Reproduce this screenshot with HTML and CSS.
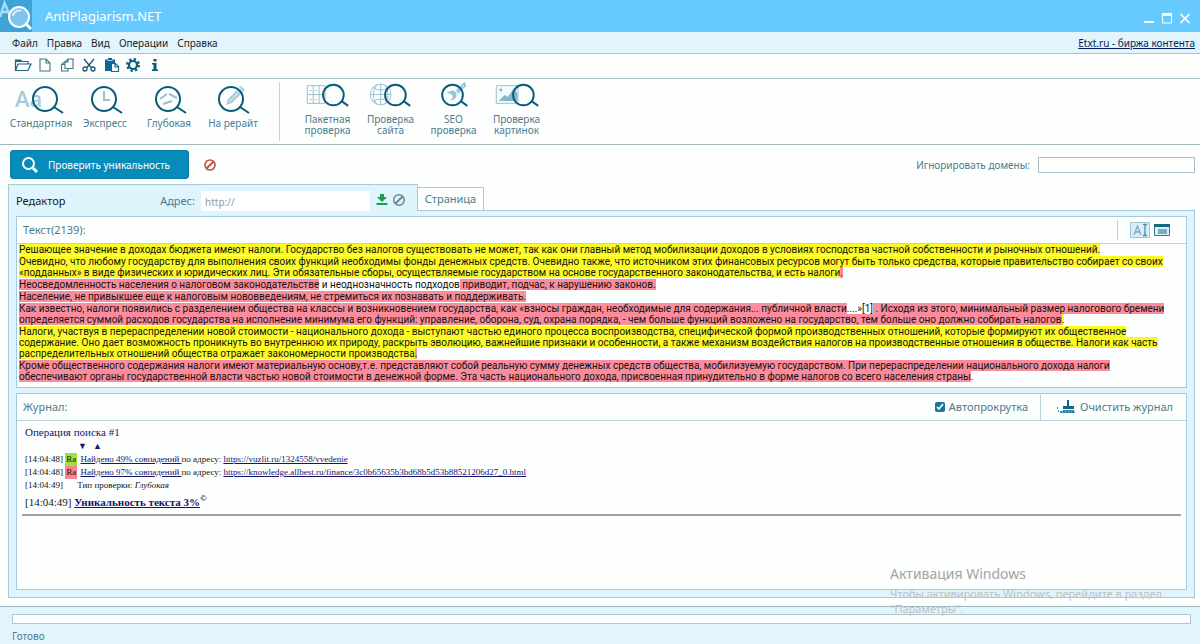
FILE: index.html
```html
<!DOCTYPE html>
<html lang="ru">
<head>
<meta charset="utf-8">
<title>AntiPlagiarism.NET</title>
<link rel="stylesheet" href="styles.css">
</head>
<body>
<header class="titlebar">
  <svg class="logo" viewBox="0 0 32 32" aria-hidden="true">
    <rect width="32" height="32" fill="#3fa3d8"/>
    <path d="M0 17L4.500 3L10 16M1.500 12H8" fill="none" stroke="#a5dcf7" stroke-width="2.500"/>
    <circle cx="19" cy="17" r="10" fill="#7fc4ea" stroke="#fff" stroke-width="2"/>
    <path d="M13 16a6 6 0 0 1 8-5" fill="none" stroke="#d5effc" stroke-width="2"/>
    <path d="M26 24l5 5" stroke="#fff" stroke-width="3"/>
  </svg>
  <h1 class="app-name">AntiPlagiarism.NET</h1>
  <div class="window-buttons">
    <button aria-label="Свернуть"><svg viewBox="0 0 12 14"><path d="M1 11h10" stroke="#fff" stroke-width="2"/></svg></button>
    <button aria-label="Развернуть"><svg viewBox="0 0 12 14"><path d="M1.500 4v8h9V4" fill="none" stroke="#fff"/><path d="M1 3.500h10" stroke="#fff" stroke-width="3"/></svg></button>
    <button aria-label="Закрыть"><svg viewBox="0 0 12 14"><path d="M1.500 3l9 9M10.500 3l-9 9" stroke="#fff" stroke-width="1.700"/></svg></button>
  </div>
</header>

<nav class="menubar">
  <button>Файл</button><button>Правка</button><button>Вид</button><button>Операции</button><button>Справка</button>
  <a class="site-link" href="#">Etxt.ru - биржа контента</a>
</nav>

<div class="toolbar">
  <button aria-label="Открыть"><svg viewBox="0 0 18 16"><path d="M1.500 13V3h5l1.500 1.500h6V7" fill="none" stroke="#1d6383" stroke-width="1.200"/><path d="M2 3h5v2H2z" fill="#1d6383"/><path d="M1.500 13.500L4 7h13l-3 6.500z" fill="#fff" stroke="#1d6383" stroke-width="1.200"/></svg></button>
  <button aria-label="Новый"><svg viewBox="0 0 18 16"><path d="M4 2h6l4 4v8H4zM10 2v4h4" fill="none" stroke="#477387" stroke-width="1.100"/></svg></button>
  <button aria-label="Копировать"><svg viewBox="0 0 18 16"><path d="M7 4.500L3.500 7.500V14H10v-2.500M3.500 7.500H7M10 2h5v9.500H7V5zM10 2v3H7" fill="none" stroke="#477387" stroke-width="1.100"/></svg></button>
  <button aria-label="Вырезать"><svg viewBox="0 0 18 16"><path d="M4 2l7.500 9M14 2l-7.500 9" stroke="#1d5672" stroke-width="1.300"/><circle cx="5" cy="12" r="2" fill="none" stroke="#1d5672" stroke-width="1.300"/><circle cx="13" cy="12" r="2" fill="none" stroke="#1d5672" stroke-width="1.300"/></svg></button>
  <button aria-label="Вставить"><svg viewBox="0 0 18 16"><path d="M3 2.500h3V1h4v1.500h3V6H9v8H3z" fill="#0d6a91"/><path d="M5.500 3.500h5" stroke="#a9d3e6"/><path d="M9.500 6.500h4l3 3v5h-7zM13 7v3h3" fill="#fff" stroke="#0d6a91" stroke-width="1.200"/></svg></button>
  <button aria-label="Настройки"><svg viewBox="0 0 18 16"><circle cx="9" cy="8" r="5.500" fill="none" stroke="#0b607f" stroke-width="3" stroke-dasharray="2.160 2.160"/><circle cx="9" cy="8" r="4" fill="none" stroke="#0b607f" stroke-width="2.200"/></svg></button>
  <button aria-label="Информация"><svg viewBox="0 0 18 16"><path d="M7.500 2h3v2.500h-3zM6 6h4.500v6.500H12V14H6v-1.500h1.500v-5H6z" fill="#0b5674"/></svg></button>
</div>

<div class="ribbon">
  <div class="group modes">
    <button><svg viewBox="0 0 64 32"><text x="6" y="23" class="glyph">Aa</text><circle cx="36" cy="15" r="12" class="lens"/><path d="M45 23l9 6" class="grip"/></svg>Стандартная</button>
    <button><svg viewBox="0 0 64 32"><path d="M31 7v9h6" class="pale"/><circle cx="31" cy="15" r="12" class="lens"/><path d="M40 23l9 6" class="grip"/></svg>Экспресс</button>
    <button><svg viewBox="0 0 64 32"><path d="M23 15l7-5M32 10l8 4M26 20l9-3" class="pale"/><circle cx="31" cy="15" r="12" class="lens"/><path d="M40 23l9 6" class="grip"/></svg>Глубокая</button>
    <button><svg viewBox="0 0 64 32"><path d="M25 21l2-6L37 5l4 4-10 10z" fill="#a9cfde"/><path d="M38 3l2-1 4 4-2 2z" fill="#a9cfde"/><path d="M29 17l9-9" stroke="#e8f4f8"/><circle cx="30" cy="15" r="12" class="lens"/><path d="M39 23l9 6" class="grip"/></svg>На рерайт</button>
  </div>
  <div class="group checks">
    <button><svg viewBox="0 0 64 28"><path d="M11.500 3.500h18v18h-18zM17.500 3v19M23.500 3v19M12 12.500h17M14 8.500h2M19 8.500h2M14 17.500h2M19 17.500h2" fill="none" stroke="#9cc0cf"/><circle cx="38" cy="13" r="10.500" class="lens"/><path d="M46 19l7 5" class="grip"/></svg>Пакетная<br>проверка</button>
    <button><svg viewBox="0 0 64 28"><circle cx="22" cy="12.500" r="10.500" class="thin"/><path d="M22 2v21M11.500 12.500h21M14 5q8 6 16 0M14 20q8-6 16 0M18 2.500q-7 10 0 20M26 2.500q7 10 0 20" class="thin"/><circle cx="37" cy="13" r="10.500" class="lens"/><path d="M45 19l7 5" class="grip"/></svg>Проверка<br>сайта</button>
    <button><svg viewBox="0 0 64 28"><path d="M25 11q4-4 8-2 4 3 1 7-2 3-6 2 4-1 3-4-2-3-6-3z" fill="#9cc7da"/><path d="M35 9l6-6 2-2 1 3-3 2-5 5" fill="none" stroke="#8cc3df" stroke-width="1.700"/><circle cx="31" cy="13" r="10.500" class="lens"/><path d="M39 19l7 5" class="grip"/></svg>SEO<br>проверка</button>
    <button><svg viewBox="0 0 64 28"><path d="M11.500 3.500h22v18h-22z" fill="#f3fafd" stroke="#9cc0cf"/><path d="M14 19l6-6 3 2 6-8 4 4v8z" fill="#82b6ca"/><circle cx="16" cy="8" r="1.500" fill="#82b6ca"/><circle cx="39" cy="13" r="10.500" class="lens"/><path d="M47 19l7 5" class="grip"/></svg>Проверка<br>картинок</button>
  </div>
</div>

<main class="workspace">
  <div class="actions">
    <button class="primary"><svg viewBox="0 0 18 18"><circle cx="7.500" cy="7.500" r="5.500" fill="none" stroke="#fff" stroke-width="2"/><path d="M12 12l4 4" stroke="#fff" stroke-width="3"/></svg>Проверить уникальность</button>
    <button class="stop" aria-label="Остановить"><svg viewBox="0 0 14 14"><circle cx="7" cy="7" r="5" fill="none" stroke="#c4533b" stroke-width="1.700"/><path d="M3.500 10.500l7-7" stroke="#c4533b" stroke-width="2"/></svg></button>
    <label class="ignore">Игнорировать домены:<input type="text"></label>
  </div>

  <div class="tabs">
    <div class="tab active">
      <span class="tab-name">Редактор</span>
      <label class="address">Адрес:<input type="text" placeholder="http://"></label>
      <button aria-label="Загрузить"><svg viewBox="0 0 14 14"><path d="M5 1h4v3h3L7 9 2 4h3z" fill="#1ea04a"/><path d="M1.500 11h11" stroke="#1ea04a" stroke-width="2"/></svg></button>
      <button aria-label="Отменить"><svg viewBox="0 0 14 14"><circle cx="7" cy="7" r="5.300" fill="none" stroke="#73858c" stroke-width="1.500"/><path d="M3.500 10.500l7-7" stroke="#73858c" stroke-width="2"/></svg></button>
    </div>
    <button class="tab other">Страница</button>
  </div>

  <div class="panel">
    <section class="box">
      <div class="box-head">
        <h2>Текст(2139):</h2>
        <div class="view-buttons">
          <button aria-label="Режим текста"><svg viewBox="0 0 20 16"><path d="M.500.500h19v15H.500z" fill="#d9eff8" stroke="#9cc5d5"/><path d="M4 13L7.500 4 11 13M5 10h5" fill="none" stroke="#7caabb" stroke-width="1.300"/><path d="M13 2.500h4M13 13.500h4M15 3v10" stroke="#4a8ca3" stroke-width="1.300"/></svg></button>
          <button aria-label="Режим окна"><svg viewBox="0 0 16 16"><path d="M.500 2.500h15v11H.500z" fill="#d9eff8" stroke="#2e7a94"/><path d="M0 2h16v3H0z" fill="#176683"/><path d="M4 7h9v5H4z" fill="#76adc1"/></svg></button>
        </div>
      </div>
      <div class="editor">
        <p><mark class="y">Решающее значение в доходах бюджета имеют налоги. Государство без налогов существовать не может, так как они главный метод мобилизации доходов в условиях господства частной собственности и рыночных отношений.</mark></p>
        <p><mark class="y">Очевидно, что любому государству для выполнения своих функций необходимы фонды денежных средств. Очевидно также, что источником этих финансовых ресурсов могут быть только средства, которые правительство собирает со своих<br>«подданных» в виде физических и юридических лиц. Эти обязательные сборы, осуществляемые государством на основе государственного законодательства, и есть налоги</mark><mark class="r">.</mark></p>
        <p><mark class="r">Неосведомленность населения о налоговом законодательстве</mark> и неоднозначность подходов<mark class="r"> приводит, подчас, к нарушению законов.</mark></p>
        <p><mark class="r">Население, не привыкшее еще к налоговым нововведениям, не стремиться их познавать и поддерживать.</mark></p>
        <p><mark class="r">Как известно, налоги появились с разделением общества на классы и возникновением государства, как «взносы граждан, необходимые для содержания... публичной власти</mark>....»[1]<mark class="r"> . Исходя из этого, минимальный размер налогового бремени<br>определяется суммой расходов государства на исполнение минимума его функций: управление, оборона, суд, охрана порядка, - чем больше функций возложено на государство, тем больше оно должно собирать налогов</mark><mark class="y">.</mark></p>
        <p><mark class="y">Налоги, участвуя в перераспределении новой стоимости - национального дохода - выступают частью единого процесса воспроизводства, специфической формой производственных отношений, которые формируют их общественное<br>содержание. Оно дает возможность проникнуть во внутреннюю их природу, раскрыть эволюцию, важнейшие признаки и особенности, а также механизм воздействия налогов на производственные отношения в обществе. Налоги как часть<br>распределительных отношений общества отражает закономерности производства</mark><mark class="r">.</mark></p>
        <p><mark class="r">Кроме общественного содержания налоги имеют материальную основу,т.е. представляют собой реальную сумму денежных средств общества, мобилизуемую государством. При перераспределении национального дохода налоги<br>обеспечивают органы государственной власти частью новой стоимости в денежной форме. Эта часть национального дохода, присвоенная принудительно в форме налогов со всего населения страны</mark>.</p>
      </div>
    </section>

    <section class="box journal">
      <div class="box-head">
        <h2>Журнал:</h2>
        <div class="journal-tools">
          <label class="autoscroll"><input type="checkbox" checked>Автопрокрутка</label>
          <button class="clear"><svg viewBox="0 0 20 16"><path d="M11 1h2v6h5v3H7V7h4z" fill="#12668a"/><path d="M7 11h11l1 3H5z" fill="#4d9fbd"/><path d="M8 11v3M11 11v3M14 11v3M17 11v3" stroke="#12668a"/><path d="M4 13h2M1 9h1M2 12h1" stroke="#12668a" stroke-width="1.500"/></svg>Очистить журнал</button>
        </div>
      </div>
      <div class="log">
        <p class="op">Операция поиска #1</p>
        <p class="arrows"><a href="#">▼</a><a href="#">▲</a></p>
        <p class="row">[14:04:48] <b class="tag green">Ra</b> <a href="#">Найдено 49% совпадений </a>по адресу: <a href="#">https://vuzlit.ru/1324558/vvedenie</a></p>
        <p class="row">[14:04:48] <b class="tag red">Ra</b> <a href="#">Найдено 97% совпадений </a>по адресу: <a href="#">https://knowledge.allbest.ru/finance/3c0b65635b3bd68b5d53b88521206d27_0.html</a></p>
        <p class="row">[14:04:49] <span class="kind">Тип проверки: <i>Глубокая</i></span></p>
        <p class="total">[14:04:49] <a href="#">Уникальность текста 3%</a><sup>©</sup></p>
        <hr>
      </div>
    </section>
  </div>
</main>

<footer class="status">
  <div class="progress"></div>
  <p>Готово</p>
</footer>

<aside class="activation">
  <strong>Активация Windows</strong>
  <p>Чтобы активировать Windows, перейдите в раздел "Параметры".</p>
</aside>
</body>
</html>
```
FILE: styles.css
```css
* { box-sizing: border-box; }
body {
  margin: 0;
  min-height: 100vh;
  display: flex;
  flex-direction: column;
  position: relative;
  background: #fdfefe;
  color: #4c7c8c;
  font: 10px/14px "Noto Sans", "Open Sans", sans-serif;
}
h1, h2, p { margin: 0; font-weight: 400; }
button { border: 0; padding: 0; margin: 0; background: none; color: inherit; font: inherit; }
svg { display: block; }
input { font: inherit; }

.titlebar { display: flex; align-items: center; height: 32px; background: #66cafe; color: #fff; }
.logo { width: 32px; height: 32px; margin-right: 13px; }
.app-name { font-size: 13px; line-height: 18px; }
.window-buttons { display: flex; gap: 6px; margin-left: auto; padding: 3px 9px 0 0; }
.window-buttons svg { width: 12px; height: 14px; }

.menubar { display: flex; align-items: center; gap: 9px; height: 22px; padding: 0 5px 0 12px; background: #e2f5fd; border-bottom: 1px solid #a9c4cd; color: #17242b; }
.site-link { margin-left: auto; color: #0a1a5c; }

.toolbar { display: flex; align-items: center; gap: 4px; height: 25px; padding: 0 0 2px 14px; border-bottom: 1px solid #a9c4cd; }
.toolbar svg { width: 18px; height: 16px; }

.ribbon { display: flex; height: 66px; padding: 3px 9px; border-bottom: 1px solid #a3b8bf; }
.group { display: flex; align-items: flex-start; }
.group button { text-align: center; white-space: nowrap; }
.modes { padding-right: 14px; border-right: 1px solid #c2d3d9; }
.modes button { width: 64px; padding-top: 2px; }
.modes svg { width: 64px; height: 32px; }
.checks { padding-left: 16px; }
.checks button { width: 63px; line-height: 11px; }
.checks svg { width: 63px; height: 28px; margin-bottom: 4px; }
.lens { fill: none; stroke: #0a5c7a; stroke-width: 2; }
.grip { fill: none; stroke: #0a5c7a; stroke-width: 2; }
.pale { fill: none; stroke: #9dbfcc; stroke-width: 2; }
.thin { fill: none; stroke: #9cc0cf; stroke-width: 1; }
.glyph { font: 600 22px "Open Sans", sans-serif; fill: #a9cbd9; }

.workspace { flex: 1; display: flex; flex-direction: column; padding: 5px 5px 8px 8px; }
.actions { display: flex; align-items: center; height: 29px; margin: 0 0 5px 2px; }
.primary { display: flex; align-items: center; gap: 9px; height: 29px; padding: 0 18px 0 10px; border: 1px solid #0b7ba6; border-radius: 3px; background: #078bba; color: #fff; }
.primary svg { width: 18px; height: 18px; }
.stop { margin-left: 14px; }
.stop svg { width: 14px; height: 14px; }
.ignore { display: flex; align-items: center; gap: 8px; margin-left: auto; }
.ignore input { width: 157px; height: 16px; border: 1px solid #a9bfc9; background: #fff; }

.tabs { display: flex; align-items: flex-end; position: relative; }
.tab { border: 1px solid #a5cbd9; border-bottom: 0; }
.active { display: flex; align-items: center; gap: 3px; width: 410px; height: 27px; margin-bottom: -1px; padding: 6px 11px 0 7px; background: #e0f4fe; font-size: 11px; }
.active button { padding-bottom: 3px; }
.tab-name { margin-right: auto; color: #14232a; }
.address { display: flex; align-items: center; gap: 6px; margin-right: 2px; }
.address input { width: 169px; height: 20px; border: 0; padding: 2px 4px 0; background: #fff; font-size: 10px; }
.address input::placeholder { color: #8d9ba1; opacity: 1; }
.active svg { width: 14px; height: 14px; }
.other { height: 23px; width: 66px; border-left: 0; font-size: 11px; background: #fdfefe; }

.panel { flex: 1; display: flex; flex-direction: column; gap: 5px; padding: 5px 7px 7px; border: 1px solid #a5cbd9; background: #e0f4fe; }
.box { background: #fdfefe; border: 1px solid #a5cbd9; }
.box-head { display: flex; align-items: center; justify-content: space-between; height: 27px; padding-left: 6px; border-bottom: 1px solid #b9d3dc; }
.box h2 { font-size: 11px; }
.view-buttons { display: flex; align-items: center; gap: 4px; height: 20px; padding: 0 16px 0 12px; border-left: 1px solid #b9d3dc; }
.view-buttons svg { height: 16px; }
.editor { display: flex; flex-direction: column; gap: 1px; padding: 0 2px 5px; color: #14140c; font: 10px/11px Roboto, Arial, sans-serif; white-space: nowrap; }
mark { color: inherit; }
.y { background: #fbf928; }
.r { background: #fb8c9e; }

.journal { flex: 1; }
.journal-tools { display: flex; align-self: stretch; font-size: 11px; }
.autoscroll { display: flex; align-items: center; gap: 4px; padding-right: 12px; }
.autoscroll input { width: 10px; height: 10px; margin: 0; accent-color: #17769a; }
.clear { display: flex; align-items: center; gap: 4px; padding: 0 13px 0 15px; border-left: 1px solid #b9d3dc; }
.clear svg { width: 20px; height: 16px; }
.log { padding: 4px 5px 0 8px; color: #141414; font: 9px/13px "Liberation Serif", "Times New Roman", serif; }
.log a { color: #15156e; }
.op { color: #15156e; font-size: 11px; line-height: 14px; }
.arrows { display: flex; gap: 6px; padding-left: 53px; font-size: 9px; line-height: 14px; }
.log .arrows a { text-decoration: none; }
.tag { display: inline-block; padding: 0 1px; margin: 0 1px 0 0; font-weight: 400; }
.green { background: #9be23c; }
.red { background: #f58495; }
.kind { padding-left: 12px; }
.total { font-size: 11px; line-height: 20px; }
.total a { font-weight: 700; }
.total sup { font-size: 9px; line-height: 9px; font-weight: 700; }
.log hr { height: 2px; margin: 2px 0 0 -3px; border: 0; background: #a0a0a0; }

.status { padding: 7px 9px 1px 12px; border-top: 1px solid #a3b8bf; background: #e2f5fd; }
.progress { height: 10px; margin-bottom: 5px; border: 1px solid #a9c9d6; background: #fdfefe; }

.activation { position: absolute; right: 25px; bottom: 28px; width: 285px; color: #bcc1c3; font-size: 11px; line-height: 15px; }
.activation strong { display: block; margin-bottom: 3px; color: #a0a5a7; font-size: 14px; font-weight: 400; line-height: 19px; }
```
